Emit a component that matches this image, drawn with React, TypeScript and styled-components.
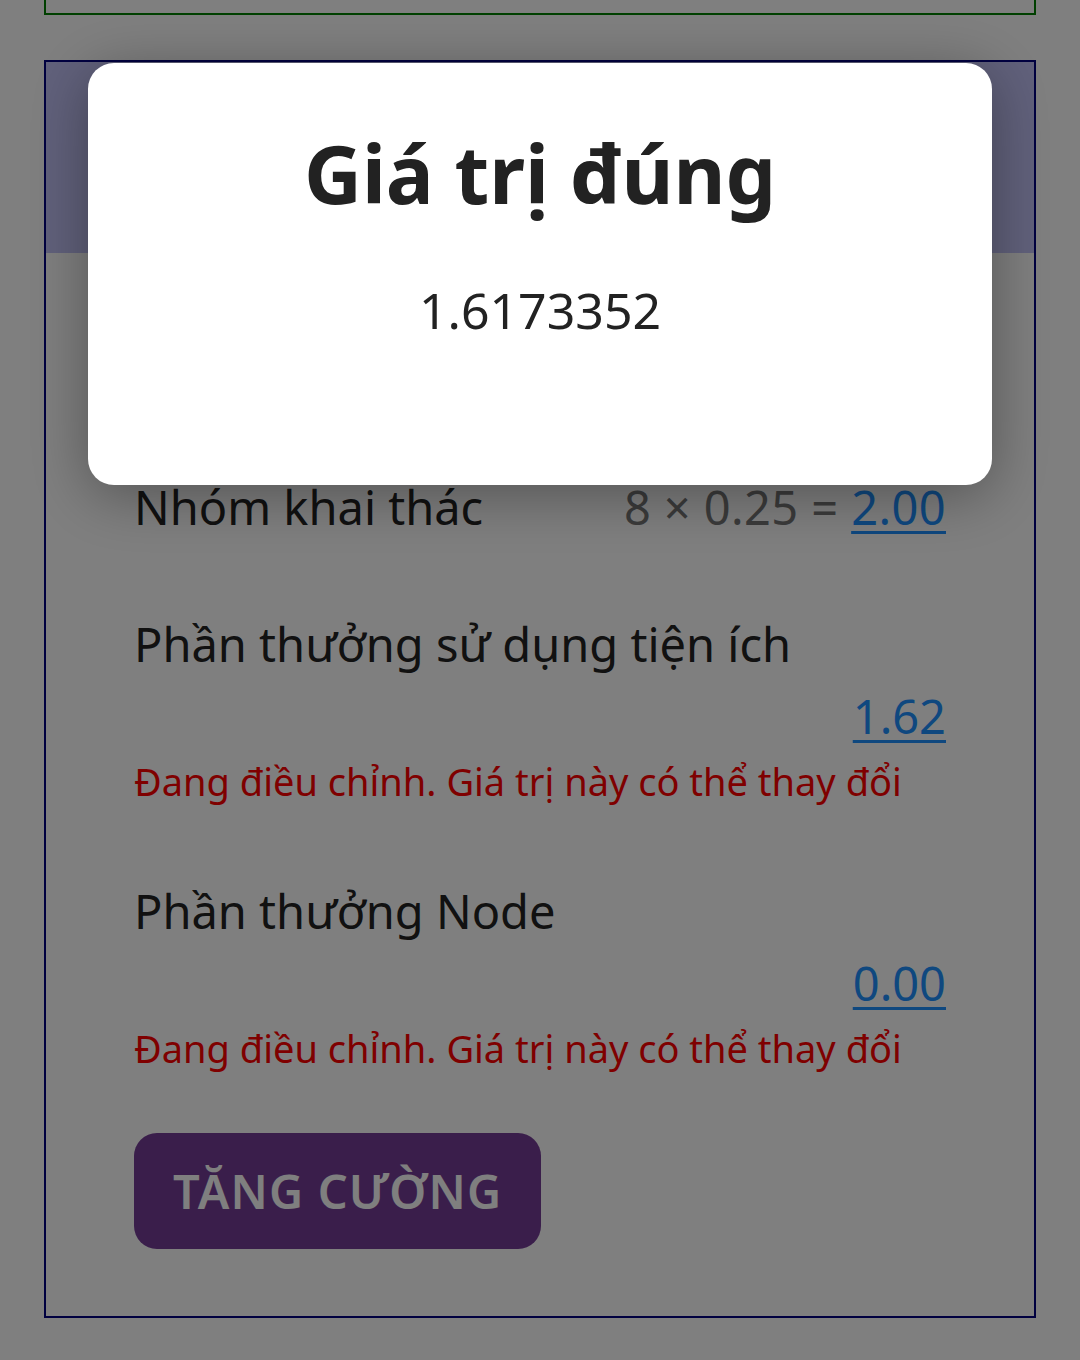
import React from "react";
import styled, { createGlobalStyle } from "styled-components";

const GlobalStyle = createGlobalStyle`
  html, body {
    margin: 0;
    padding: 0;
    background: #ffffff;
    font-family: "Noto Sans", "Open Sans", sans-serif;
    color: #222222;
  }
  * {
    box-sizing: border-box;
  }
`;

type Reward = {
  label: string;
  value: string;
};

const rewards: Reward[] = [
  { label: "Phần thưởng sử dụng tiện ích", value: "1.62" },
  { label: "Phần thưởng Node", value: "0.00" },
];

const App: React.FC = () => {
  return (
    <>
      <GlobalStyle />
      <Page>
        <TopBox />
        <Card>
          <CardHeader />
          <CardBody>
            <Row>
              <Label>Nhóm khai thác</Label>
              <Formula>
                8 × 0.25 = <ValueLink href="#">2.00</ValueLink>
              </Formula>
            </Row>
            {rewards.map((r) => (
              <Section key={r.label}>
                <Label>{r.label}</Label>
                <ValueLine>
                  <ValueLink href="#">{r.value}</ValueLink>
                </ValueLine>
                <Warning>Đang điều chỉnh. Giá trị này có thể thay đổi</Warning>
              </Section>
            ))}
            <BoostButton>Tăng cường</BoostButton>
          </CardBody>
        </Card>
      </Page>
      <Overlay>
        <Modal>
          <ModalTitle>Giá trị đúng</ModalTitle>
          <ModalValue>1.6173352</ModalValue>
        </Modal>
      </Overlay>
    </>
  );
};

const Page = styled.div`
  display: flex;
  flex-direction: column;
  padding: 0 44px 44px 44px;
`;

const TopBox = styled.div`
  height: 15px;
  border: 2px solid green;
  border-top: none;
  margin-bottom: 45px;
`;

const Card = styled.div`
  border: 2px solid navy;
  background: #ffffff;
  display: flex;
  flex-direction: column;
`;

const CardHeader = styled.div`
  height: 191px;
  background: #c2c2f6;
`;

const CardBody = styled.div`
  display: flex;
  flex-direction: column;
  gap: 65px;
  padding: 218px 88px 67px 88px;
`;

const Row = styled.div`
  display: flex;
  justify-content: space-between;
  align-items: center;
`;

const Label = styled.div`
  font-size: 47px;
  line-height: 72px;
  color: #222222;
`;

const Formula = styled.div`
  font-size: 47px;
  line-height: 72px;
  color: #777777;
  letter-spacing: 0.4px;
`;

const ValueLink = styled.a`
  color: #1e90ff;
  text-decoration: underline;
  text-decoration-thickness: 3px;
  text-underline-offset: 6px;
`;

const Section = styled.div`
  display: flex;
  flex-direction: column;
`;

const ValueLine = styled.div`
  text-align: right;
  font-size: 47px;
  line-height: 72px;
`;

const Warning = styled.div`
  font-size: 38px;
  line-height: 58px;
  color: red;
`;

const BoostButton = styled.button`
  align-self: flex-start;
  margin-top: -9px;
  height: 116px;
  padding: 0 39px;
  border: none;
  border-radius: 23px;
  background: #743c96;
  color: #ffffff;
  font-family: "Noto Sans", "Open Sans", sans-serif;
  font-size: 47px;
  font-weight: 600;
  text-transform: uppercase;
  letter-spacing: 1.2px;
`;

const Overlay = styled.div`
  position: fixed;
  inset: 0;
  background: rgba(0, 0, 0, 0.5);
  display: flex;
  justify-content: center;
  align-items: flex-start;
  padding-top: 63px;
`;

const Modal = styled.div`
  width: 904px;
  height: 422px;
  background: #ffffff;
  border-radius: 26px;
  box-shadow: 0 10px 60px rgba(0, 0, 0, 0.35);
  display: flex;
  flex-direction: column;
  align-items: center;
  padding-top: 57px;
`;

const ModalTitle = styled.h1`
  margin: 0;
  font-size: 80px;
  line-height: 106px;
  font-weight: 700;
  color: #222222;
`;

const ModalValue = styled.div`
  margin-top: 51px;
  font-size: 50px;
  line-height: 67px;
  color: #222222;
`;

export default App;
